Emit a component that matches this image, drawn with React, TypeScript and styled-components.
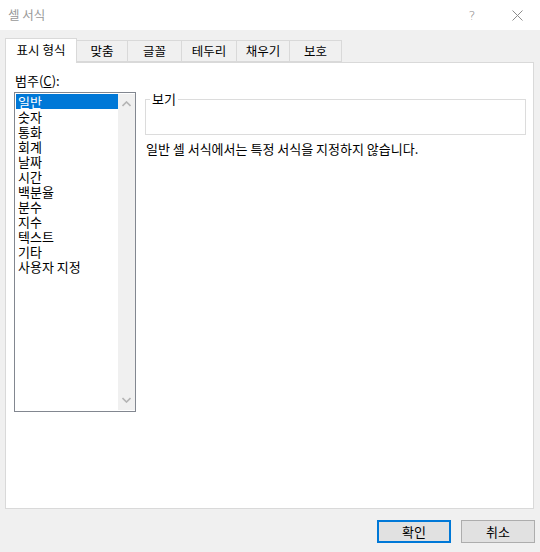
import React from "react";
import styled, { createGlobalStyle } from "styled-components";

const Global = createGlobalStyle`
  html, body { margin: 0; padding: 0; }
  body {
    background: #f0f0f0;
    font-family: "Noto Sans CJK KR", "Noto Sans", sans-serif;
    font-size: 13px;
    color: #000;
  }
  * { box-sizing: border-box; }
`;

const Dialog = styled.div`
  width: 540px;
  height: 552px;
  display: flex;
  flex-direction: column;
  background: #f0f0f0;
  overflow: hidden;
`;

const TitleBar = styled.div`
  height: 30px;
  flex: none;
  background: #fff;
  display: flex;
  align-items: center;
  padding-left: 8px;
`;

const Title = styled.div`
  flex: 1;
  color: #999;
  font-size: 12.5px;
  line-height: 16px;
`;

const TitleButton = styled.div<{ $w: number }>`
  width: ${(p) => p.$w}px;
  height: 30px;
  display: flex;
  align-items: center;
  justify-content: center;
  color: #999;
`;

const Help = styled.span`
  font-family: "DejaVu Sans", sans-serif;
  font-size: 13px;
  font-weight: 300;
  line-height: 13px;
  color: #8c8c8c;
`;

const Body = styled.div`
  flex: 1;
  display: flex;
  flex-direction: column;
  padding: 8px 6px 8px 5px;
`;

const TabStrip = styled.div`
  display: flex;
  align-items: flex-end;
  height: 24px;
  position: relative;
  z-index: 1;
`;

const Tab = styled.div<{ $w: number; $active?: boolean }>`
  width: ${(p) => p.$w}px;
  height: ${(p) => (p.$active ? 25 : 22)}px;
  margin-bottom: ${(p) => (p.$active ? -1 : 0)}px;
  margin-left: ${(p) => (p.$active ? 0 : -1)}px;
  background: ${(p) => (p.$active ? "#fff" : "#f0f0f0")};
  border: 1px solid #d9d9d9;
  border-bottom: ${(p) => (p.$active ? "none" : "1px solid #d9d9d9")};
  display: flex;
  align-items: center;
  justify-content: center;
  padding-bottom: ${(p) => (p.$active ? 2 : 0)}px;
  font-size: 12.5px;
  line-height: 16px;
  position: relative;
  z-index: ${(p) => (p.$active ? 2 : 1)};
  &:first-child { margin-left: 0; }
`;

const Panel = styled.div`
  height: 447px;
  background: #fff;
  border: 1px solid #d9d9d9;
  display: flex;
  padding: 10px 7px 0 8px;
  gap: 9px;
`;

const LeftCol = styled.div`
  width: 122px;
  display: flex;
  flex-direction: column;
`;

const Label = styled.div`
  height: 16px;
  line-height: 16px;
  padding-left: 1px;
  margin-bottom: 3px;
  font-size: 13px;
  u { text-decoration: underline; }
`;

const ListBox = styled.div`
  height: 320px;
  border: 1px solid #828790;
  display: flex;
  padding: 1px 0 1px 1px;
`;

const Items = styled.div`
  flex: 1;
  display: flex;
  flex-direction: column;
`;

const Item = styled.div<{ $sel?: boolean }>`
  height: 15px;
  line-height: 15px;
  padding-left: 2px;
  font-size: 13px;
  background: ${(p) => (p.$sel ? "#0078d7" : "transparent")};
  color: ${(p) => (p.$sel ? "#fff" : "#000")};
`;

const ScrollBar = styled.div`
  width: 17px;
  background: #f0f0f0;
  display: flex;
  flex-direction: column;
  justify-content: space-between;
  align-items: center;
  padding: 7px 0 7px;
`;

const RightCol = styled.div`
  flex: 1;
  display: flex;
  flex-direction: column;
  padding-top: 26px;
`;

const Group = styled.div`
  height: 36px;
  border: 1px solid #dcdcdc;
  position: relative;
`;

const Legend = styled.span`
  position: absolute;
  top: -9px;
  left: 4px;
  background: #fff;
  padding: 0 2px 0 2px;
  line-height: 16px;
  font-size: 13px;
`;

const Desc = styled.div`
  margin-top: 6px;
  padding-left: 1px;
  line-height: 16px;
  font-size: 13px;
`;

const ButtonRow = styled.div`
  display: flex;
  justify-content: flex-end;
  gap: 10px;
  margin-top: 11px;
  margin-right: -1px;
`;

const Button = styled.button<{ $default?: boolean }>`
  width: 74px;
  height: 23px;
  background: #e1e1e1;
  border: ${(p) => (p.$default ? "2px solid #0078d7" : "1px solid #adadad")};
  font-family: "Noto Sans CJK KR", "Noto Sans", sans-serif;
  font-size: 13px;
  line-height: 16px;
  color: #000;
  padding: 0;
  display: flex;
  align-items: center;
  justify-content: center;
`;

const Chevron = ({ up }: { up?: boolean }) => (
  <svg width="9" height="6" viewBox="0 0 9 6">
    <path
      d={up ? "M0.5 5 L4.5 1 L8.5 5" : "M0.5 1 L4.5 5 L8.5 1"}
      fill="none"
      stroke="#b4b4b4"
      strokeWidth="1.6"
    />
  </svg>
);

const tabs: [string, number][] = [
  ["표시 형식", 72],
  ["맞춤", 52],
  ["글꼴", 55],
  ["테두리", 56],
  ["채우기", 54],
  ["보호", 53],
];

const categories = [
  "일반",
  "숫자",
  "통화",
  "회계",
  "날짜",
  "시간",
  "백분율",
  "분수",
  "지수",
  "텍스트",
  "기타",
  "사용자 지정",
];

export default function App() {
  return (
    <>
      <Global />
      <Dialog>
        <TitleBar>
          <Title>셀 서식</Title>
          <TitleButton $w={44}>
            <Help>?</Help>
          </TitleButton>
          <TitleButton $w={46}>
            <svg width="11" height="11" viewBox="0 0 11 11">
              <path d="M0.5 0.5 L10.5 10.5 M10.5 0.5 L0.5 10.5" stroke="#8c8c8c" strokeWidth="1" />
            </svg>
          </TitleButton>
        </TitleBar>
        <Body>
          <TabStrip>
            {tabs.map(([t, w], i) => (
              <Tab key={t} $w={w} $active={i === 0}>
                {t}
              </Tab>
            ))}
          </TabStrip>
          <Panel>
            <LeftCol>
              <Label>
                범주(<u>C</u>):
              </Label>
              <ListBox>
                <Items>
                  {categories.map((c, i) => (
                    <Item key={c} $sel={i === 0}>
                      {c}
                    </Item>
                  ))}
                </Items>
                <ScrollBar>
                  <Chevron up />
                  <Chevron />
                </ScrollBar>
              </ListBox>
            </LeftCol>
            <RightCol>
              <Group>
                <Legend>보기</Legend>
              </Group>
              <Desc>일반 셀 서식에서는 특정 서식을 지정하지 않습니다.</Desc>
            </RightCol>
          </Panel>
          <ButtonRow>
            <Button $default>확인</Button>
            <Button>취소</Button>
          </ButtonRow>
        </Body>
      </Dialog>
    </>
  );
}
